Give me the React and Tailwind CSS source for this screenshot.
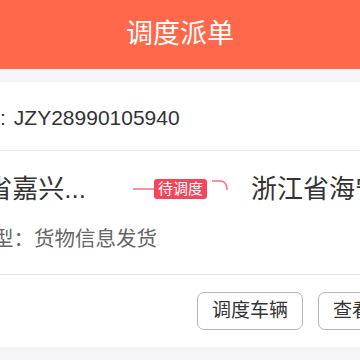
import React from "react";

const cjk = { fontFamily: '"Liberation Sans", "Noto Sans CJK SC", sans-serif' };

export default function App() {
  return (
    <div className="w-[360px] h-[360px] overflow-hidden bg-[#f5f5f7]" style={cjk}>
      <div className="h-[69px] bg-[#ff684a] flex items-center justify-center">
        <span className="text-white text-[27px] leading-none">调度派单</span>
      </div>
      <div className="h-[13px] bg-[#f5f5f7]" />
      <div className="bg-white overflow-hidden">
        <div className="h-[69px] pt-[3px] flex items-center border-b border-[#e8e8e8] whitespace-nowrap">
          <div className="w-0 shrink-0 flex justify-end">
            <span className="text-[21px] text-[#333]">运单号</span>
          </div>
          <span className="text-[21px] text-[#333]">:</span>
          <span className="ml-[8px] text-[21px] text-[#333]">JZY28990105940</span>
        </div>
        <div className="pt-[20px] pb-[21px] border-b border-[#e8e8e8]">
          <div className="h-[36px] flex items-center whitespace-nowrap">
            <div className="w-[86px] shrink-0 flex justify-end">
              <span className="text-[26px] text-[#333]">浙江省嘉兴...</span>
            </div>
            <div className="ml-[47px] relative w-[95px] h-[36px] shrink-0 flex items-center justify-center">
              <svg className="absolute left-0 top-0" width="95" height="36" viewBox="0 0 95 36" fill="none">
                <line x1="0" y1="18" x2="22" y2="18" stroke="#f9707f" strokeWidth="1.5" />
                <path d="M79 10 H87 Q94 10 94 19" stroke="#f9707f" strokeWidth="1.5" fill="none" />
              </svg>
              <span className="relative bg-[#f5445b] text-white text-[15px] leading-[20px] h-[20px] w-[53px] text-center rounded-[3px]">待调度</span>
            </div>
            <div className="ml-[23px] text-[26px] text-[#333]">浙江省海宁市</div>
          </div>
          <div className="mt-[18px] h-[28px] flex items-center whitespace-nowrap">
            <div className="w-[34px] shrink-0 flex justify-end">
              <span className="text-[20.5px] text-[#666]">运单类型：</span>
            </div>
            <span className="text-[20.5px] text-[#666]">货物信息发货</span>
          </div>
        </div>
        <div className="h-[72px] flex items-center whitespace-nowrap">
          <div className="ml-[197px] flex gap-[15px] shrink-0">
            <button className="w-[106px] h-[38px] border border-[#b5b5b5] rounded-[7px] text-[19px] text-[#333] bg-white">调度车辆</button>
            <button className="w-[106px] h-[38px] border border-[#b5b5b5] rounded-[7px] text-[19px] text-[#333] bg-white">查看详情</button>
          </div>
        </div>
      </div>
    </div>
  );
}
